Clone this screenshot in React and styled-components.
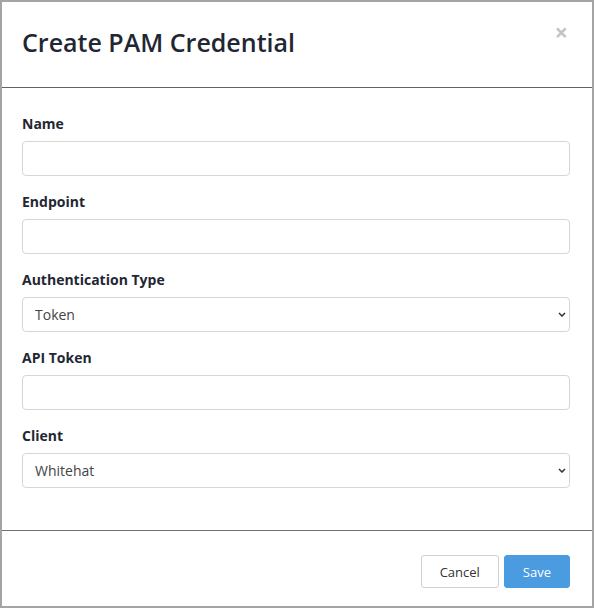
import React from "react";
import styled, { createGlobalStyle } from "styled-components";

const GlobalStyle = createGlobalStyle`
  html, body {
    margin: 0;
    padding: 0;
    background: #ffffff;
  }
  body {
    font-family: "Open Sans", "Liberation Sans", sans-serif;
    color: #1f2733;
  }
  * {
    box-sizing: border-box;
  }
`;

const fields = [
  { label: "Name", type: "input" },
  { label: "Endpoint", type: "input" },
  { label: "Authentication Type", type: "select", value: "Token" },
  { label: "API Token", type: "input" },
  { label: "Client", type: "select", value: "Whitehat" },
];

const Chevron = () => (
  <svg width="8" height="5" viewBox="0 0 8 5" fill="none">
    <path d="M1 1l3 3 3-3" stroke="#333" strokeWidth="1.5" />
  </svg>
);

const App = () => {
  return (
    <>
      <GlobalStyle />
      <Modal>
        <Header>
          <Title>Create PAM Credential</Title>
          <Close aria-label="Close">×</Close>
        </Header>
        <Body>
          {fields.map((field) => (
            <Group key={field.label}>
              <Label>{field.label}</Label>
              {field.type === "select" ? (
                <Select>
                  <span>{field.value}</span>
                  <Chevron />
                </Select>
              ) : (
                <Input />
              )}
            </Group>
          ))}
        </Body>
        <Footer>
          <Button>Cancel</Button>
          <Button primary>Save</Button>
        </Footer>
      </Modal>
    </>
  );
};

const Modal = styled.div`
  width: 594px;
  height: 608px;
  border: 2px solid #a4a4a4;
  background: #fff;
  display: flex;
  flex-direction: column;
`;

const Header = styled.div`
  height: 86px;
  padding: 22px 22px 0 20px;
  display: flex;
  justify-content: space-between;
  align-items: flex-start;
  border-bottom: 1px solid #5d636b;
`;

const Title = styled.h2`
  margin: 0;
  font-size: 25px;
  line-height: 36px;
  font-weight: 600;
  color: #1f2733;
`;

const Close = styled.span`
  font-size: 23px;
  line-height: 20px;
  font-weight: 700;
  color: #c4c4c4;
  margin-top: -2px;
  margin-right: 2px;
  cursor: pointer;
`;

const Body = styled.div`
  flex: 1;
  padding: 26px 22px 1px 20px;
  border-bottom: 1px solid #6b7077;
`;

const Group = styled.div`
  margin-bottom: 16px;
`;

const Label = styled.div`
  font-size: 14px;
  line-height: 20px;
  font-weight: 700;
  color: #1f2733;
  margin-bottom: 7px;
`;

const Input = styled.input`
  display: block;
  width: 100%;
  height: 35px;
  border: 1px solid #d6d6d6;
  border-radius: 4px;
  background: #fff;
  padding: 0 12px;
  font-family: inherit;
  font-size: 14px;
`;

const Select = styled.div`
  display: flex;
  align-items: center;
  justify-content: space-between;
  height: 35px;
  border: 1px solid #d6d6d6;
  border-radius: 4px;
  padding: 0 3px 0 12px;
  font-size: 14px;
  color: #444;
`;

const Footer = styled.div`
  height: 75px;
  padding: 24px 22px 0 0;
  display: flex;
  justify-content: flex-end;
  align-items: flex-start;
  gap: 5px;
`;

const Button = styled.button`
  height: 33px;
  padding: 0 18px;
  border-radius: 3px;
  font-family: inherit;
  font-size: 13px;
  border: 1px solid ${(p) => (p.primary ? "#4a9be0" : "#d0d0d0")};
  background: ${(p) => (p.primary ? "#4a9be0" : "#fff")};
  color: ${(p) => (p.primary ? "#fff" : "#333")};
  cursor: pointer;
`;

export default App;
